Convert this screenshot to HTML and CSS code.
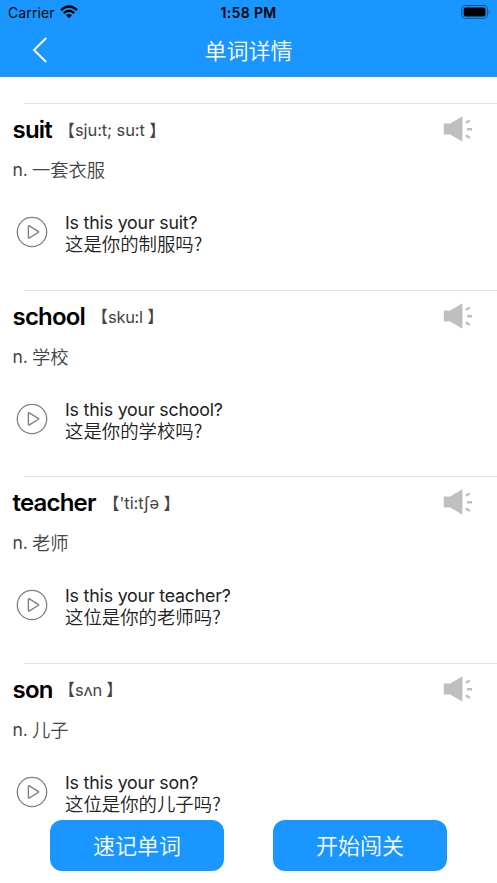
FILE: index.html
```html
<!DOCTYPE html>
<html lang="zh-CN">
<head>
<meta charset="utf-8">
<title>单词详情</title>
<link rel="stylesheet" href="styles.css">
</head>
<body>
<svg class="defs" width="0" height="0">
  <symbol id="speaker" viewBox="0 0 30 28"><path fill="#bfbfbf" d="M.8 8.6h6.4L19.4 1.2v25.6L7.2 19.4H.8z"/><path fill="none" stroke="#bfbfbf" stroke-width="2.4" d="M22.8 7.8l4-2.3M24 14.2h5M22.8 20.2l4 2.7"/></symbol>
  <symbol id="play" viewBox="0 0 32 32"><circle cx="16" cy="16" r="14.7" fill="none" stroke="#808080" stroke-width="1.3"/><path fill="none" stroke="#808080" stroke-width="1.4" stroke-linejoin="round" d="M12.4 10.4Q12.4 9.4 13.3 9.9L22.2 15.3Q23 15.9 22.2 16.5L13.3 21.9Q12.4 22.4 12.4 21.4z"/></symbol>
</svg>
<div class="screen">
  <header class="header">
    <div class="status">
      <div class="carrier"><span>Carrier</span>
        <svg width="18" height="14" viewBox="0 0 18 14" fill="none" stroke="#000" stroke-width="2.4"><path d="M1 5.1Q9-2.1 17 5.1M3.8 8.1Q9 3.6 14.2 8.1"/><path d="M6.1 10.2Q9 8 11.9 10.2L9 13.2z" fill="#000" stroke="none"/></svg>
      </div>
      <time class="time">1:58 PM</time>
      <svg class="battery" width="30" height="14" viewBox="0 0 30 14"><rect x=".8" y=".5" width="25.6" height="12.8" rx="3.6" fill="none" stroke="#0c5290"/><rect x="2.7" y="2.5" width="21.8" height="9" rx="2" fill="#000"/><path d="M27.8 4.8q2 2.1 0 4.2z" fill="#0c5290"/></svg>
    </div>
    <nav class="nav">
      <svg class="back" width="16" height="26" viewBox="0 0 16 26" fill="none" stroke="#fff" stroke-width="1.9"><path d="M14.2 1L2 13l12.2 12"/></svg>
      <h1 class="title">单词详情</h1>
    </nav>
  </header>
  <main class="list">
    <article class="item">
      <div class="head"><h2 class="word w-suit">suit</h2><span class="phonetic"><b>【</b><i class="p-suit">sju:t; su:t</i><b class="close">】</b></span><svg class="speaker"><use href="#speaker"/></svg></div>
      <p class="meaning"><span class="pos">n.</span>一套衣服</p>
      <div class="example"><svg class="play"><use href="#play"/></svg><div><p class="en">Is this your suit?</p><p class="zh">这是你的制服吗?</p></div></div>
    </article>
    <article class="item">
      <div class="head"><h2 class="word w-school">school</h2><span class="phonetic"><b>【</b><i class="p-school">sku:l</i><b class="close">】</b></span><svg class="speaker"><use href="#speaker"/></svg></div>
      <p class="meaning"><span class="pos">n.</span>学校</p>
      <div class="example"><svg class="play"><use href="#play"/></svg><div><p class="en">Is this your school?</p><p class="zh">这是你的学校吗?</p></div></div>
    </article>
    <article class="item">
      <div class="head"><h2 class="word w-teacher">teacher</h2><span class="phonetic"><b>【</b><i class="p-teacher">'ti:tʃə</i><b class="close">】</b></span><svg class="speaker"><use href="#speaker"/></svg></div>
      <p class="meaning"><span class="pos">n.</span>老师</p>
      <div class="example"><svg class="play"><use href="#play"/></svg><div><p class="en">Is this your teacher?</p><p class="zh">这位是你的老师吗?</p></div></div>
    </article>
    <article class="item">
      <div class="head"><h2 class="word w-son">son</h2><span class="phonetic"><b>【</b><i class="p-son">sʌn</i><b class="close">】</b></span><svg class="speaker"><use href="#speaker"/></svg></div>
      <p class="meaning"><span class="pos">n.</span>儿子</p>
      <div class="example"><svg class="play"><use href="#play"/></svg><div><p class="en">Is this your son?</p><p class="zh">这位是你的儿子吗?</p></div></div>
    </article>
  </main>
  <footer class="actions"><button class="btn">速记单词</button><button class="btn">开始闯关</button></footer>
</div>
</body>
</html>
```
FILE: styles.css
```css
* { box-sizing: border-box; margin: 0; padding: 0; }
body { font-family: Inter, "Noto Sans CJK SC", sans-serif; background: #fff; overflow: hidden; }
.defs { display: block; }
.screen { position: relative; width: 497px; height: 883px; overflow: hidden; }
.header { height: 77px; background: #1996ff; }
.status { display: grid; grid-template-columns: 1fr auto 1fr; align-items: center; height: 25px; padding: 0 6px 0 8px; }
.carrier { display: flex; align-items: center; gap: 6px; font-size: 14px; letter-spacing: 0.1px; }
.carrier svg { margin: -1px 0 0 -1px; }
.time { margin-left: -2px; font-size: 14px; font-weight: 600; letter-spacing: 0.35px; }
.battery { justify-self: end; margin-top: -1px; }
.nav { display: grid; grid-template-columns: 1fr auto 1fr; align-items: center; height: 50px; }
.back { margin-left: 32px; }
.title { margin-top: -2px; font: 350 22px/32px "Noto Sans CJK SC", sans-serif; color: #fff; }
.list { padding-top: 26px; }
.item { height: 186.6px; padding-left: 12.5px; background: linear-gradient(#e2e2e2, #e2e2e2) 24px 0 / 100% 1px no-repeat; }
.head { display: flex; align-items: center; height: 54px; }
.word { font-size: 24px; font-weight: 600; line-height: 30px; letter-spacing: -0.8px; white-space: nowrap; }
.w-suit { width: 46px; }
.w-school { width: 79px; }
.w-teacher { width: 90.5px; }
.w-son { width: 46px; }
.phonetic { display: flex; align-items: center; font-size: 16.5px; line-height: 24px; color: #444; white-space: nowrap; }
.phonetic b { margin-top: -1px; font: 400 16.5px/24px "Noto Sans CJK SC", sans-serif; }
.phonetic .close { margin-left: 4.5px; }
.phonetic i { font-style: normal; letter-spacing: -0.1px; }
.phonetic .p-school { letter-spacing: -0.3px; }
.phonetic .p-son { letter-spacing: -0.3px; }
.speaker { width: 30px; height: 28px; margin: -2px 24px 0 auto; }
.meaning { display: flex; height: 26px; font: 350 18.3px/24px "Noto Sans CJK SC", sans-serif; color: #444; }
.pos { width: 19.5px; font-family: Inter, sans-serif; font-size: 17.5px; font-weight: 400; line-height: 26px; }
.example { display: flex; align-items: center; height: 44px; margin: 28px 0 0 3.5px; color: #222; }
.play { width: 32px; height: 32px; margin: -2px 17px 0 0; }
.en { font-size: 17.8px; line-height: 22px; letter-spacing: -0.19px; }
.zh { margin: -1px 0 1px; font: 350 18.4px/20px "Noto Sans CJK SC", sans-serif; }
.actions { position: absolute; left: 50px; top: 820.4px; display: flex; gap: 49px; }
.btn { width: 174px; height: 50.5px; padding-bottom: 4px; border: 0; border-radius: 12px; background: #1996ff; color: #fff; font: 350 22px/46px "Noto Sans CJK SC", sans-serif; }
```
